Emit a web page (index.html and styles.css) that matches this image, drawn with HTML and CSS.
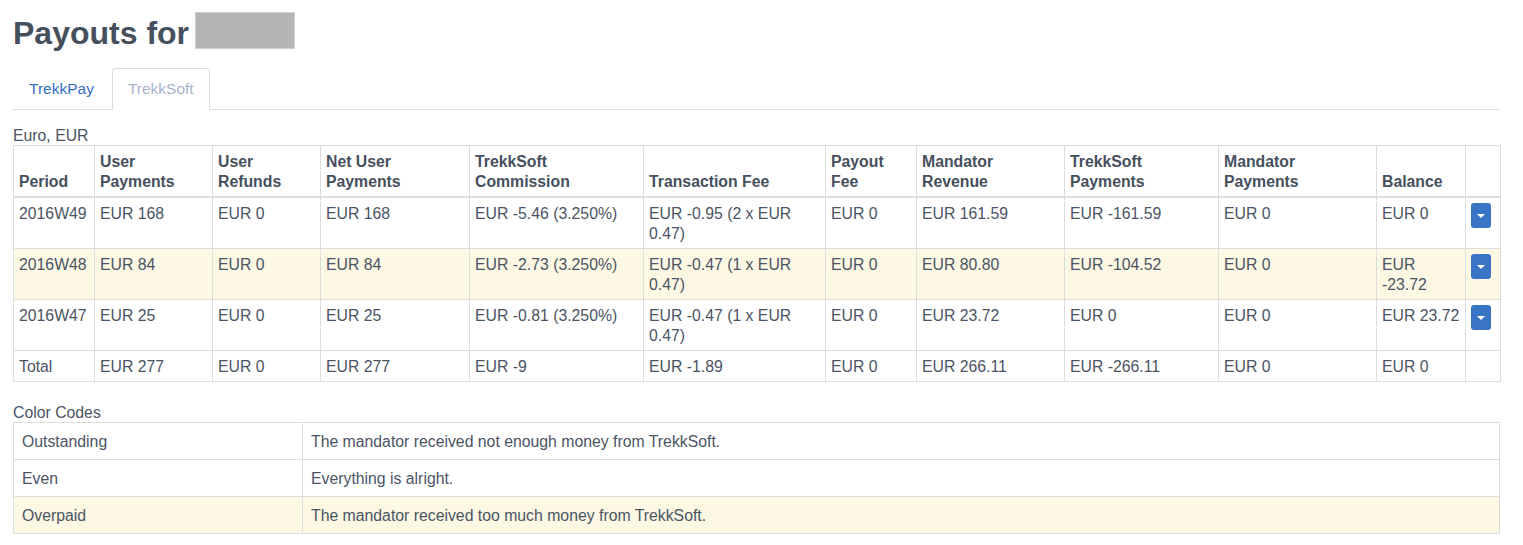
FILE: index.html
```html
<!DOCTYPE html>
<html>
<head>
<meta charset="utf-8">
<link rel="stylesheet" href="styles.css">
</head>
<body>
<div class="page">
  <h1 class="title">Payouts for <span class="redacted"></span></h1>
  <ul class="tabs">
    <li class="tab"><a href="#">TrekkPay</a></li>
    <li class="tab active"><a href="#">TrekkSoft</a></li>
  </ul>
  <div class="caption">Euro, EUR</div>
  <table class="payouts">
    <colgroup>
      <col style="width:81px"><col style="width:118px"><col style="width:108px"><col style="width:149px"><col style="width:174px"><col style="width:182px"><col style="width:91px"><col style="width:148px"><col style="width:154px"><col style="width:158px"><col style="width:89px"><col style="width:35px">
    </colgroup>
    <thead>
      <tr>
        <th>Period</th>
        <th>User<br>Payments</th>
        <th>User<br>Refunds</th>
        <th>Net User<br>Payments</th>
        <th>TrekkSoft<br>Commission</th>
        <th>Transaction Fee</th>
        <th>Payout<br>Fee</th>
        <th>Mandator<br>Revenue</th>
        <th>TrekkSoft<br>Payments</th>
        <th>Mandator<br>Payments</th>
        <th>Balance</th>
        <th></th>
      </tr>
    </thead>
    <tbody>
      <tr>
        <td>2016W49</td><td>EUR 168</td><td>EUR 0</td><td>EUR 168</td><td>EUR -5.46 (3.250%)</td><td>EUR -0.95 (2 x EUR 0.47)</td><td>EUR 0</td><td>EUR 161.59</td><td>EUR -161.59</td><td>EUR 0</td><td>EUR 0</td>
        <td><button class="caret-btn"><span class="caret"></span></button></td>
      </tr>
      <tr class="warning">
        <td>2016W48</td><td>EUR 84</td><td>EUR 0</td><td>EUR 84</td><td>EUR -2.73 (3.250%)</td><td>EUR -0.47 (1 x EUR 0.47)</td><td>EUR 0</td><td>EUR 80.80</td><td>EUR -104.52</td><td>EUR 0</td><td>EUR -23.72</td>
        <td><button class="caret-btn"><span class="caret"></span></button></td>
      </tr>
      <tr>
        <td>2016W47</td><td>EUR 25</td><td>EUR 0</td><td>EUR 25</td><td>EUR -0.81 (3.250%)</td><td>EUR -0.47 (1 x EUR 0.47)</td><td>EUR 0</td><td>EUR 23.72</td><td>EUR 0</td><td>EUR 0</td><td>EUR 23.72</td>
        <td><button class="caret-btn"><span class="caret"></span></button></td>
      </tr>
      <tr class="total">
        <td>Total</td><td>EUR 277</td><td>EUR 0</td><td>EUR 277</td><td>EUR -9</td><td>EUR -1.89</td><td>EUR 0</td><td>EUR 266.11</td><td>EUR -266.11</td><td>EUR 0</td><td>EUR 0</td><td></td>
      </tr>
    </tbody>
  </table>

  <div class="caption codes-caption">Color Codes</div>
  <table class="codes">
    <colgroup><col style="width:289px"><col></colgroup>
    <tbody>
      <tr><td>Outstanding</td><td>The mandator received not enough money from TrekkSoft.</td></tr>
      <tr><td>Even</td><td>Everything is alright.</td></tr>
      <tr class="warning"><td>Overpaid</td><td>The mandator received too much money from TrekkSoft.</td></tr>
    </tbody>
  </table>
</div>
</body>
</html>
```

FILE: styles.css
```css
html, body {
  margin: 0;
  padding: 0;
  background: #ffffff;
}

body {
  font-family: "Liberation Sans", Arial, Helvetica, sans-serif;
  font-size: 15.8px;
  line-height: 20px;
  color: #4b5464;
}

.page {
  padding: 0 23px 0 13px;
}

.title {
  margin: 12px 0 0;
  font-size: 32px;
  line-height: 40px;
  font-weight: bold;
  color: #46505d;
}

.redacted {
  display: inline-block;
  width: 100px;
  height: 37px;
  margin-left: -3px;
  background: #b5b5b5;
  border: 1px solid #cfcfcf;
  box-sizing: border-box;
  vertical-align: -5px;
}

.tabs {
  list-style: none;
  margin: 15px 0 0;
  padding: 0;
  display: flex;
  border-bottom: 1px solid #dddddd;
  font-size: 15.5px;
}

.tab {
  margin-bottom: -1px;
}

.tab a {
  display: block;
  margin-right: 2px;
  padding: 10px 15px;
  line-height: 20px;
  border: 1px solid transparent;
  border-radius: 4px 4px 0 0;
  color: #3470c4;
  text-decoration: none;
}

.tab.active a {
  color: #a6b4ca;
  background: #ffffff;
  border-color: #dddddd #dddddd transparent;
}

.caption {
  margin-top: 15px;
  line-height: 20px;
  padding-top: 1px;
  margin-bottom: -1px;
}

.codes-caption {
  margin-top: 20px;
}

table {
  width: 100%;
  border-collapse: collapse;
  border-spacing: 0;
  table-layout: fixed;
}

.payouts th,
.payouts td {
  border: 1px solid #dddddd;
  padding: 6px 5px 4px;
  line-height: 20px;
  text-align: left;
}

.payouts th {
  vertical-align: bottom;
  font-weight: bold;
  color: #46505d;
  border-bottom-width: 2px;
}

.payouts td {
  vertical-align: top;
}

.warning td {
  background: #fcf8e3;
}

.caret-btn {
  display: flex;
  align-items: center;
  justify-content: center;
  width: 20px;
  height: 25px;
  margin-top: -1px;
  padding: 0;
  border: none;
  border-radius: 3px;
  background: #3a74c4;
  cursor: pointer;
}

.caret {
  display: block;
  width: 0;
  height: 0;
  border-left: 4px solid transparent;
  border-right: 4px solid transparent;
  border-top: 4px solid #ffffff;
}

.codes td {
  border: 1px solid #dddddd;
  padding: 9px 8px 7px;
  line-height: 20px;
  vertical-align: top;
}
```
